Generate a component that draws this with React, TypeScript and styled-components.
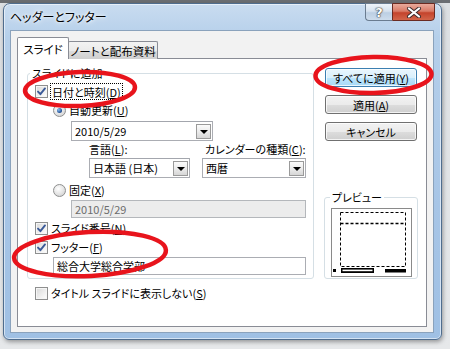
import React, { FC, ReactNode } from "react";
import styled, { createGlobalStyle } from "styled-components";

const GlobalStyle = createGlobalStyle`
  html, body {
    margin: 0;
    padding: 0;
  }
  body {
    background: #d3d6d9;
    font-family: "Noto Sans CJK JP", "Noto Sans", sans-serif;
    font-size: 11px;
    font-feature-settings: "palt";
    color: #000;
  }
`;

const Check: FC<{ checked?: boolean }> = ({ checked }) => (
  <CheckBox>
    {checked && (
      <svg width="11" height="11" viewBox="0 0 11 11">
        <path
          d="M2 5.6 L4.4 8.2 L9 2.4"
          fill="none"
          stroke="#3b5a98"
          strokeWidth="1.9"
          strokeLinecap="round"
          strokeLinejoin="round"
        />
      </svg>
    )}
  </CheckBox>
);

const Combo: FC<{ width: number; children: ReactNode }> = ({ width, children }) => (
  <ComboBox style={{ width }}>
    <ComboText>{children}</ComboText>
    <DropButton>
      <Arrow />
    </DropButton>
  </ComboBox>
);

const PreviewPicture: FC = () => (
  <svg width="81" height="69" viewBox="0 0 81 69">
    <rect x="0.5" y="0.5" width="80" height="68" fill="#fff" stroke="#8a8a8a" />
    <rect x="9.5" y="4.5" width="65" height="54" fill="none" stroke="#000" strokeDasharray="3 2" />
    <line x1="9.5" y1="15.5" x2="74.5" y2="15.5" stroke="#000" strokeWidth="1.6" strokeDasharray="3 2" />
    <rect x="2" y="61" width="3" height="3" fill="#000" />
    <rect x="10" y="60" width="33" height="5" fill="#000" />
    <rect x="11.5" y="61.6" width="30" height="1.6" fill="#fff" />
    <rect x="54" y="61" width="21" height="3.5" fill="#000" />
  </svg>
);

const App: FC = () => (
  <>
    <GlobalStyle />
    <Desktop>
      <Window>
        <TitleBar>
          <Title>ヘッダーとフッター</Title>
          <Caption>
            <HelpButton>?</HelpButton>
            <CloseButton>
              <svg width="16" height="11" viewBox="0 0 16 11">
                <path d="M3 1.5 L13 9.5 M13 1.5 L3 9.5" stroke="#3a2a2c" strokeWidth="4" strokeLinecap="round" />
                <path d="M3 1.5 L13 9.5 M13 1.5 L3 9.5" stroke="#fff" strokeWidth="2.2" strokeLinecap="round" />
              </svg>
            </CloseButton>
          </Caption>
        </TitleBar>
        <Client>
          <TabStrip>
            <Tab $active>スライド</Tab>
            <Tab>ノートと配布資料</Tab>
          </TabStrip>
          <Panel>
            <LeftCol>
              <Group>
                <Legend>スライドに追加</Legend>
                <Row $top={2} $height={18}>
                  <Check checked />
                  <Focus>
                    日付と時刻(<u>D</u>)
                  </Focus>
                </Row>
                <Row $top={2} $height={16} $indent={18}>
                  <Radio $selected />
                  <span>
                    自動更新(<u>U</u>)
                  </span>
                </Row>
                <Row $top={3} $height={20} $indent={36}>
                  <Combo width={142}>2010/5/29</Combo>
                </Row>
                <Row $top={1} $height={14} $indent={54}>
                  <FieldLabel style={{ width: 113 }}>
                    言語(<u>L</u>):
                  </FieldLabel>
                  <FieldLabel>
                    カレンダーの種類(<u>C</u>):
                  </FieldLabel>
                </Row>
                <Row $top={2} $height={20} $indent={54} $gap={12}>
                  <Combo width={101}>日本語 (日本)</Combo>
                  <Combo width={104}>西暦</Combo>
                </Row>
                <Row $top={4} $height={16} $indent={18}>
                  <Radio />
                  <span>
                    固定(<u>X</u>)
                  </span>
                </Row>
                <Row $top={2} $height={18} $indent={36}>
                  <TextBox $disabled style={{ width: 235 }}>
                    2010/5/29
                  </TextBox>
                </Row>
                <Row $top={1} $height={18}>
                  <Check checked />
                  <span>
                    スライド番号(<u>N</u>)
                  </span>
                </Row>
                <Row $top={1} $height={18}>
                  <Check checked />
                  <span>
                    フッター(<u>F</u>)
                  </span>
                </Row>
                <Row $top={1} $height={18} $indent={18}>
                  <TextBox style={{ width: 253 }}>総合大学総合学部</TextBox>
                </Row>
              </Group>
              <Row $top={5} $height={18} $indent={8}>
                <Check />
                <span>
                  タイトル スライドに表示しない(<u>S</u>)
                </span>
              </Row>
            </LeftCol>
            <RightCol>
              <Button $default>
                すべてに適用(<u>Y</u>)
              </Button>
              <Button>
                適用(<u>A</u>)
              </Button>
              <Button>キャンセル</Button>
              <PreviewGroup>
                <PreviewLegend>プレビュー</PreviewLegend>
                <PreviewPicture />
              </PreviewGroup>
            </RightCol>
          </Panel>
        </Client>
      </Window>
      <Marks width="450" height="349" viewBox="0 0 450 349">
        <ellipse cx="80" cy="89" rx="55" ry="17" transform="rotate(-2 80 89)" />
        <ellipse cx="373.5" cy="75" rx="58" ry="18" transform="rotate(-1 373 75)" />
        <ellipse cx="90" cy="254" rx="76" ry="22" transform="rotate(-3 90 254)" />
      </Marks>
    </Desktop>
  </>
);

export default App;

const Desktop = styled.div`
  position: relative;
  width: 450px;
  height: 349px;
  box-sizing: border-box;
  padding: 3px 0 0 3px;
  overflow: hidden;
  background: linear-gradient(to bottom, #6b6e72 0, #6b6e72 3px, #dcdfe2 3px, #e6e8ea 100%);
`;

const Window = styled.div`
  width: 439px;
  height: 337px;
  box-sizing: border-box;
  display: flex;
  flex-direction: column;
  padding: 0 7px 6px 6px;
  border: 1px solid #4f6d8e;
  border-radius: 7px 7px 6px 6px;
  background: linear-gradient(to bottom, #c9dcf0 0%, #b5cfea 10%, #a7c5e6 60%, #9fc0e4 100%);
  box-shadow: inset 0 0 0 1px rgba(255, 255, 255, 0.55), 1px 2px 4px rgba(0, 0, 0, 0.35);
`;

const TitleBar = styled.div`
  height: 26px;
  display: flex;
  align-items: center;
`;

const Title = styled.div`
  font-size: 12px;
  line-height: 14px;
  color: #000;
  text-shadow: 0 0 6px #fff, 0 0 3px #fff;
`;

const Caption = styled.div`
  margin-left: auto;
  margin-right: -1px;
  align-self: flex-start;
  margin-top: -1px;
  display: flex;
`;

const HelpButton = styled.div`
  width: 27px;
  height: 18px;
  box-sizing: border-box;
  display: flex;
  align-items: center;
  justify-content: center;
  border: 1px solid #6a7c90;
  border-right: none;
  border-radius: 0 0 0 4px;
  background: linear-gradient(to bottom, #eef3f9 0%, #d6e2ef 45%, #bccfe3 55%, #cddcec 100%);
  color: #fff;
  font-family: "DejaVu Sans", sans-serif;
  font-weight: bold;
  font-size: 13px;
  line-height: 1;
  text-shadow: 0 0 1px #333, 0 0 1px #333, 0 0 2px #555;
`;

const CloseButton = styled.div`
  width: 43px;
  height: 18px;
  box-sizing: border-box;
  display: flex;
  align-items: center;
  justify-content: center;
  border: 1px solid #6a2b22;
  border-radius: 0 0 4px 0;
  background: linear-gradient(to bottom, #e8aa9c 0%, #d97a66 45%, #c4432c 55%, #d2654a 100%);
`;

const Client = styled.div`
  flex: 1;
  display: flex;
  flex-direction: column;
  border: 1px solid #8aa2bc;
  background: #f2f2f2;
  padding: 6px 6px 5px 6px;
`;

const TabStrip = styled.div`
  height: 22px;
  display: flex;
  align-items: flex-start;
  margin-bottom: -1px;
  position: relative;
  z-index: 1;
`;

const Tab = styled.div<{ $active?: boolean }>`
  box-sizing: border-box;
  width: ${({ $active }) => ($active ? "52px" : "90px")};
  height: ${({ $active }) => ($active ? "22px" : "18px")};
  margin-top: ${({ $active }) => ($active ? "0" : "4px")};
  margin-left: ${({ $active }) => ($active ? "0" : "-1px")};
  border: 1px solid #898c95;
  border-bottom: none;
  border-radius: 2px 2px 0 0;
  background: ${({ $active }) =>
    $active ? "#fff" : "linear-gradient(to bottom, #f3f3f3 0%, #ebebeb 50%, #dddddd 51%, #cfcfcf 100%)"};
  display: flex;
  align-items: center;
  justify-content: center;
  white-space: nowrap;
  font-size: 11.5px;
  line-height: 14px;
  padding-top: 1px;
  position: relative;
  z-index: ${({ $active }) => ($active ? 2 : 1)};
`;

const Panel = styled.div`
  flex: 1;
  display: flex;
  gap: 10px;
  border: 1px solid #898c95;
  background: #fff;
  padding: 7px 10px 0 9px;
`;

const LeftCol = styled.div`
  width: 288px;
  display: flex;
  flex-direction: column;
`;

const RightCol = styled.div`
  width: 94px;
  display: flex;
  flex-direction: column;
  padding-top: 2px;
  gap: 8px;
`;

const Group = styled.fieldset`
  margin: 0;
  min-width: 0;
  padding: 0 7px 3px 7px;
  border: 1px solid #d5dfe5;
  border-radius: 3px;
`;

const Legend = styled.legend`
  margin-left: -5px;
  padding: 0 2px;
  line-height: 14px;
  height: 14px;
`;

const Row = styled.div<{ $top?: number; $height: number; $indent?: number; $gap?: number }>`
  display: flex;
  align-items: center;
  gap: ${({ $gap }) => $gap ?? 3}px;
  margin-top: ${({ $top }) => $top ?? 0}px;
  margin-left: ${({ $indent }) => $indent ?? 0}px;
  height: ${({ $height }) => $height}px;
  line-height: 14px;
  white-space: nowrap;
`;

const CheckBox = styled.span`
  width: 13px;
  height: 13px;
  flex-shrink: 0;
  box-sizing: border-box;
  border: 1px solid #8e8f8f;
  background: linear-gradient(135deg, #d8d8d8 0%, #eeeeee 55%, #ffffff 100%);
  box-shadow: inset 0 0 0 1px #f6f6f6;
  display: inline-flex;
  align-items: center;
  justify-content: center;
`;

const Radio = styled.span<{ $selected?: boolean }>`
  width: 13px;
  height: 13px;
  flex-shrink: 0;
  box-sizing: border-box;
  border-radius: 50%;
  border: 1px solid #8e8f8f;
  background: radial-gradient(circle at 40% 35%, #ffffff 0%, #e6e6e6 50%, #c9c9c9 100%);
  display: inline-flex;
  align-items: center;
  justify-content: center;
  &::after {
    content: "";
    display: ${({ $selected }) => ($selected ? "block" : "none")};
    width: 5px;
    height: 5px;
    border-radius: 50%;
    background: radial-gradient(circle at 35% 35%, #8fc0ee 0%, #2a5aa0 60%, #12305f 100%);
  }
`;

const Focus = styled.span`
  outline: 1px dotted #000;
  outline-offset: 0;
  padding: 1px 1px 0 1px;
`;

const FieldLabel = styled.span`
  display: inline-block;
`;

const ComboBox = styled.div`
  height: 20px;
  box-sizing: border-box;
  display: flex;
  align-items: center;
  border: 1px solid #abadb3;
  border-top-color: #a3a6ad;
  background: #fff;
  padding-left: 3px;
`;

const ComboText = styled.span`
  line-height: 14px;
`;

const DropButton = styled.span`
  margin-left: auto;
  margin-right: 1px;
  width: 15px;
  height: 15px;
  box-sizing: border-box;
  border: 1px solid #9a9a9a;
  background: linear-gradient(to bottom, #fbfbfb 0%, #ececec 50%, #d6d6d6 100%);
  display: flex;
  align-items: center;
  justify-content: center;
`;

const Arrow = styled.span`
  width: 0;
  height: 0;
  border-left: 4px solid transparent;
  border-right: 4px solid transparent;
  border-top: 4px solid #000;
  margin-top: 1px;
`;

const TextBox = styled.div<{ $disabled?: boolean }>`
  height: 18px;
  box-sizing: border-box;
  display: flex;
  align-items: center;
  padding-left: 3px;
  border: 1px solid ${({ $disabled }) => ($disabled ? "#b4b7bb" : "#abadb3")};
  background: ${({ $disabled }) => ($disabled ? "#ececec" : "#fff")};
  color: ${({ $disabled }) => ($disabled ? "#6d6d6d" : "#000")};
  line-height: 14px;
`;

const Button = styled.div<{ $default?: boolean }>`
  margin-left: 1px;
  width: 92px;
  height: 19px;
  box-sizing: border-box;
  display: flex;
  align-items: center;
  justify-content: center;
  line-height: 14px;
  border: 1px solid ${({ $default }) => ($default ? "#3c7fb1" : "#707070")};
  border-radius: 3px;
  background: ${({ $default }) =>
    $default
      ? "linear-gradient(to bottom, #eaf6fd 0%, #d9f0fc 50%, #bee6fd 51%, #a7d9f5 100%)"
      : "linear-gradient(to bottom, #f2f2f2 0%, #ebebeb 50%, #dddddd 51%, #cfcfcf 100%)"};
  box-shadow: inset 0 0 0 1px rgba(255, 255, 255, 0.75);
`;

const PreviewGroup = styled.fieldset`
  margin: 41px 0 0 0;
  min-width: 0;
  padding: 0 6px 1px 6px;
  border: 1px solid #d5dfe5;
  border-radius: 3px;
  display: flex;
  flex-direction: column;
  svg {
    display: block;
    margin-top: 4px;
  }
`;

const PreviewLegend = styled.legend`
  margin-left: -1px;
  padding: 0 2px;
  line-height: 14px;
  height: 14px;
`;

const Marks = styled.svg`
  position: absolute;
  left: 0;
  top: 0;
  pointer-events: none;
  ellipse {
    fill: none;
    stroke: #e8141c;
    stroke-width: 4.5;
  }
`;
